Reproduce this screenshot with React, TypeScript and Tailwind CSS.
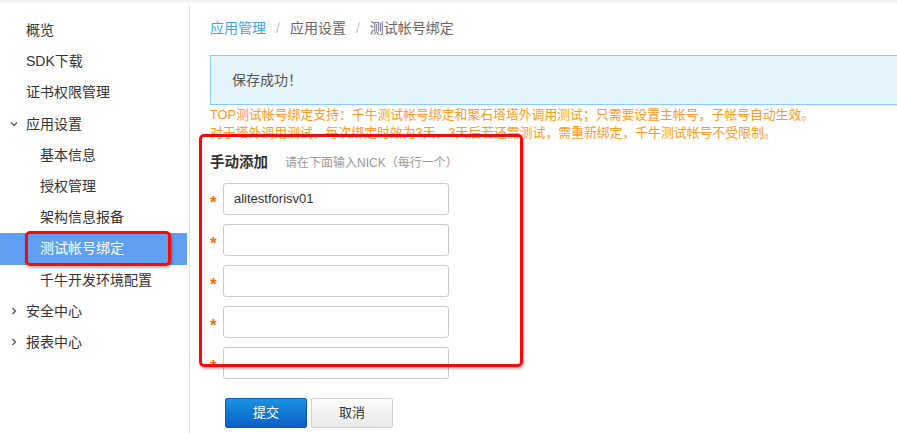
import React from "react";

const FONT = { fontFamily: '"Liberation Sans", Arial, "Noto Sans CJK SC", sans-serif' };

type NavItem = { label: string; level: 0 | 1; chevron?: "down" | "right"; active?: boolean };

const navItems: NavItem[] = [
  { label: "概览", level: 0 },
  { label: "SDK下载", level: 0 },
  { label: "证书权限管理", level: 0 },
  { label: "应用设置", level: 0, chevron: "down" },
  { label: "基本信息", level: 1 },
  { label: "授权管理", level: 1 },
  { label: "架构信息报备", level: 1 },
  { label: "测试帐号绑定", level: 1, active: true },
  { label: "千牛开发环境配置", level: 1 },
  { label: "安全中心", level: 0, chevron: "right" },
  { label: "报表中心", level: 0, chevron: "right" },
];

function Chevron({ dir }: { dir: "down" | "right" }) {
  return (
    <svg width="10" height="10" viewBox="0 0 10 10" className="absolute left-[9px] top-1/2 -translate-y-1/2">
      {dir === "down" ? (
        <path d="M2 3.5 L5 6.5 L8 3.5" fill="none" stroke="#555" strokeWidth="1.3" />
      ) : (
        <path d="M3.5 2 L6.5 5 L3.5 8" fill="none" stroke="#555" strokeWidth="1.3" />
      )}
    </svg>
  );
}

function Sidebar() {
  return (
    <aside className="relative w-[190px] shrink-0 pt-[15px]">
      <div className="absolute right-0 top-[5px] bottom-0 w-px bg-[#e3e3e3]" />
      {navItems.map((item) => (
        <div
          key={item.label}
          className={`relative mr-[3px] flex h-[31.2px] items-center text-[14px] ${
            item.active ? "bg-[#5fa0f2] text-white" : "text-[#333]"
          } ${item.level === 0 ? "pl-[26px]" : "pl-[40px]"}`}
        >
          {item.chevron && <Chevron dir={item.chevron} />}
          {item.label}
        </div>
      ))}
      {/* highlight marker around the active item */}
      <div className="absolute left-[25px] top-[231px] h-[35px] w-[146px] rounded-[5px] border-[3px] border-[#f20b0b] shadow-[1px_2px_3px_rgba(0,0,0,0.3)]" />
    </aside>
  );
}

function NickRow({ value }: { value?: string }) {
  return (
    <div className="flex items-center">
      <span className="w-[13px] pt-[7px] text-[17px] font-bold leading-none text-[#ff6a00]">*</span>
      <div className="flex h-[32px] w-[226px] items-center rounded-[3px] border border-[#cccccc] bg-white pl-[10px] text-[13px] text-[#333]">
        {value}
      </div>
    </div>
  );
}

export default function App() {
  const nicks = ["alitestforisv01", "", "", "", ""];

  return (
    <div className="relative h-[433px] w-[897px] overflow-hidden bg-white" style={FONT}>
      <div className="absolute left-0 right-0 top-0 h-[3px] bg-gradient-to-b from-[#ececec] to-[#f9f9f9]" />
      <div className="flex h-full">
        <Sidebar />

        <main className="relative flex-1 pl-[20px]">
          <div className="mt-[18px] flex h-[20px] items-center text-[14px]">
            <span className="text-[#3da5ee]">应用管理</span>
            <span className="mx-[10px] text-[#c4c4c4]">/</span>
            <span className="text-[#666]">应用设置</span>
            <span className="mx-[10px] text-[#c4c4c4]">/</span>
            <span className="text-[#666]">测试帐号绑定</span>
          </div>

          <div className="mt-[17px] flex h-[50px] w-[720px] items-center border border-[#8ccbf7] bg-[#e4f4fc] pl-[21px] text-[14px] text-[#555]">
            保存成功！
          </div>

          <div className="mt-[1px] text-[12.85px] leading-[18px] text-[#ff9a1a]">
            <p className="whitespace-nowrap">
              TOP测试帐号绑定支持：千牛测试帐号绑定和聚石塔塔外调用测试；只需要设置主帐号，子帐号自动生效。
            </p>
            <p className="whitespace-nowrap">
              对于塔外调用测试，每次绑定时效为3天，3天后若还需测试，需重新绑定，千牛测试帐号不受限制。
            </p>
          </div>

          <div className="mt-[11px] flex h-[20px] items-center">
            <span className="text-[14.5px] font-bold text-[#333]">手动添加</span>
            <span className="ml-[17px] text-[12px] text-[#999]">请在下面输入NICK（每行一个）</span>
          </div>

          <div className="mt-[10px] flex flex-col gap-[9px]">
            {nicks.map((n, i) => (
              <NickRow key={i} value={n} />
            ))}
          </div>

          <div className="mt-[19px] flex gap-[4px] pl-[15px]">
            <button className="h-[30px] w-[82px] rounded-[2px] border border-[#0a5ab8] bg-gradient-to-b from-[#1b93e2] to-[#0a60c6] text-[13px] text-white">
              提交
            </button>
            <button className="h-[30px] w-[82px] rounded-[2px] border border-[#cfcfcf] bg-gradient-to-b from-[#fbfbfb] to-[#e9e9e9] text-[13px] text-[#333]">
              取消
            </button>
          </div>

          {/* highlight marker around the manual add form */}
          <div className="absolute left-[9px] top-[134px] h-[233px] w-[324px] rounded-[5px] border-[3px] border-[#f20b0b] shadow-[1px_2px_3px_rgba(0,0,0,0.3)]" />
        </main>
      </div>
    </div>
  );
}
